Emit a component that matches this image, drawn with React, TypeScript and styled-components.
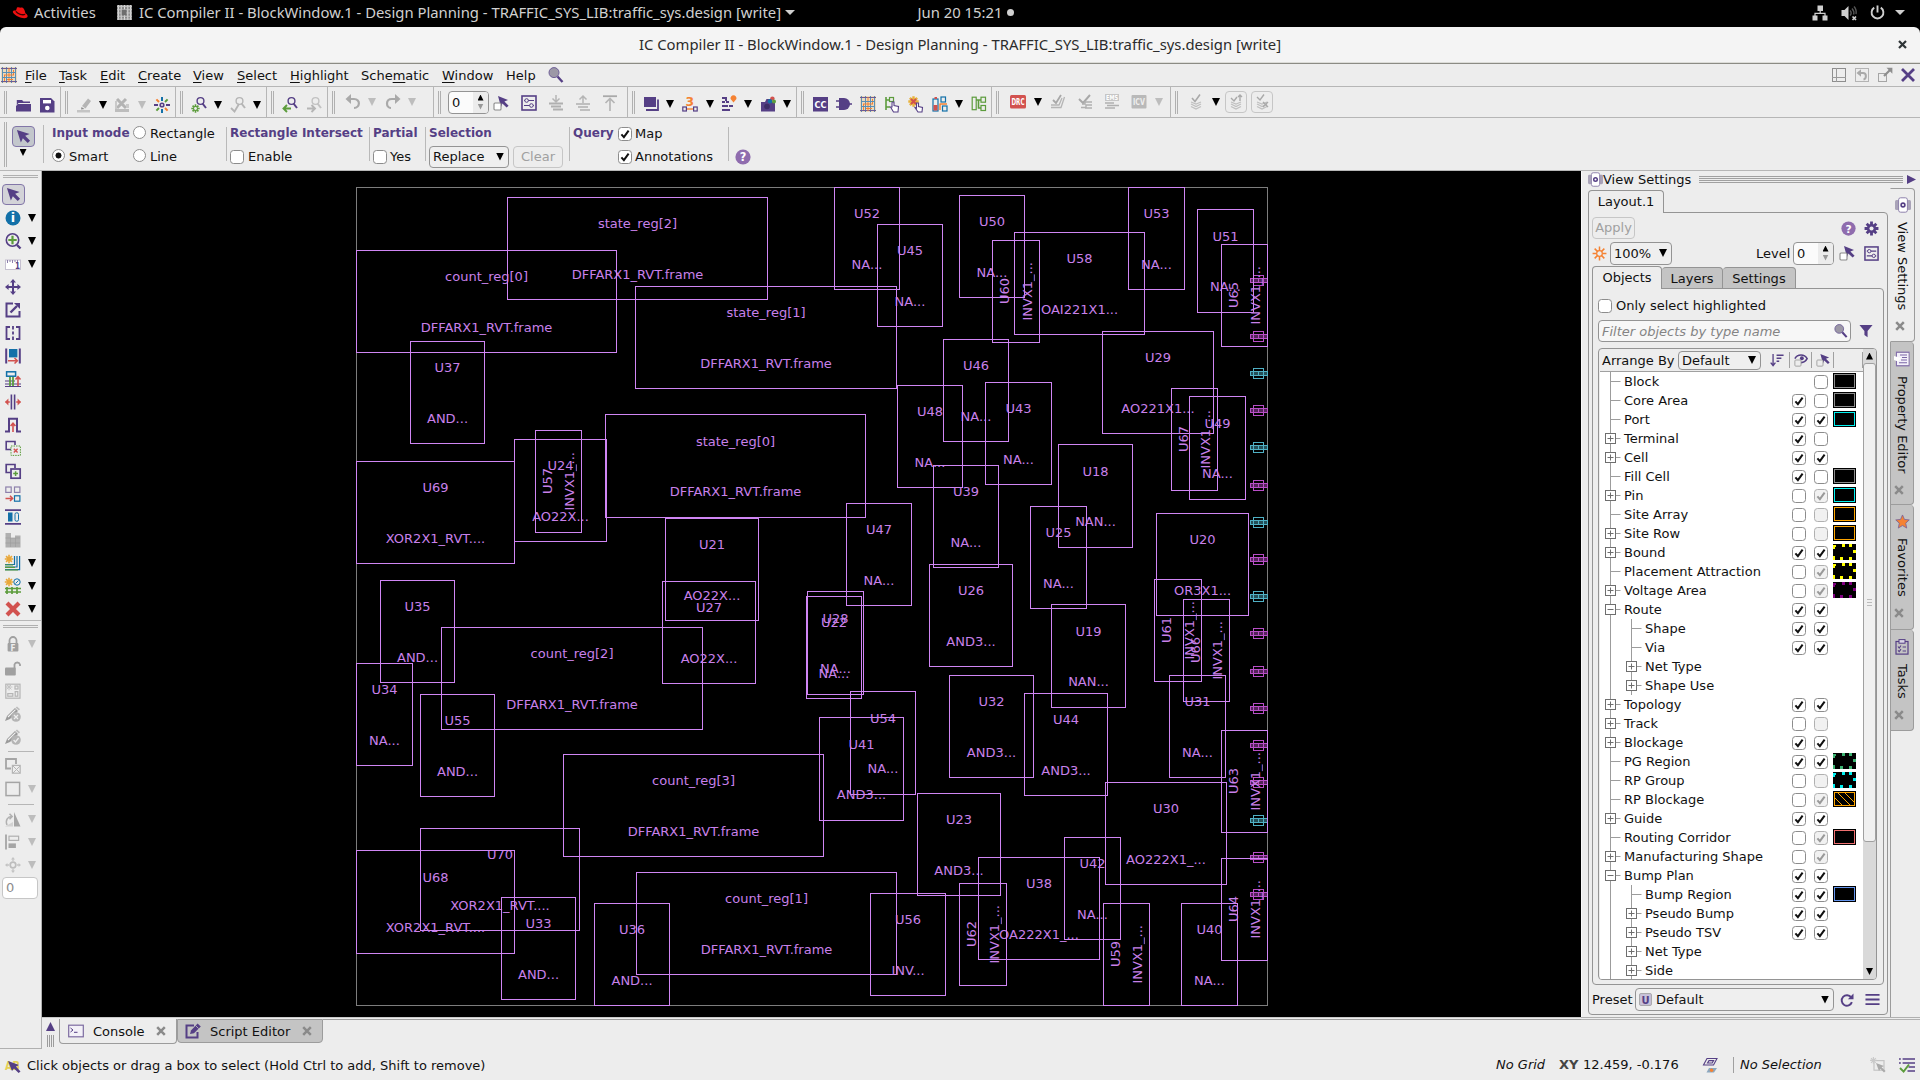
import React from "react";
import styled, { createGlobalStyle, css } from "styled-components";

const P = "#553f85";
const G = "#a9a9a9";
const R = "#d2524f";
const B = "#1270a8";
const GR = "#5c9c3c";
const O = "#f58233";

const Global = createGlobalStyle`
  * { box-sizing: border-box; }
  html, body { margin: 0; padding: 0; background: #000; }
  body { width: 1920px; height: 1080px; overflow: hidden; font: 13px/15px "DejaVu Sans", sans-serif; color: #111; }
`;

/* ---------- icons ---------- */

const box = (x: number, y: number, w: number, h: number, c: string, sw = 1.2) => (
  <rect x={x} y={y} width={w} height={h} fill="none" stroke={c} strokeWidth={sw} />
);
const ln = (d: string, c: string, w = 1.6) => <path d={d} fill="none" stroke={c} strokeWidth={w} />;
const fl = (d: string, c: string) => <path d={d} fill={c} />;
const IconText = styled.text`
  font-family: "DejaVu Sans", sans-serif;
  font-weight: 700;
`;
const tx = (s: string, x: number, y: number, size: number, w: number, c: string) => (
  <IconText x={x} y={y} fontSize={size} textLength={w} lengthAdjust="spacingAndGlyphs" fill={c}>
    {s}
  </IconText>
);
const burst = (cx: number, cy: number, r: number, c: string, w = 1.2) =>
  ln(
    `M${cx} ${cy - r}V${cy + r}M${cx - r} ${cy}H${cx + r}M${cx - r * 0.7} ${cy - r * 0.7}L${cx + r * 0.7} ${cy + r * 0.7}M${cx + r * 0.7} ${cy - r * 0.7}L${cx - r * 0.7} ${cy + r * 0.7}`,
    c,
    w
  );
const gridArt = (
  <>
    <rect width="16" height="16" fill="#ecd9bd" />
    {ln("M1.5 0V16M5.5 0V16M10.5 0V16M14.5 0V16", "#5c8fb4", 1)}
    {ln("M0 1.5H16M0 14.5H16", "#6b5b95", 1)}
    {ln("M8 1V15M3.5 8V14M12.5 3V8", O, 1)}
    {ln("M1 5.5H15M1 10.5H15", "#5c8fb4", 1)}
    {ln("M3 8H13M6 12.5H12", O, 1)}
  </>
);
const lens = (c: string) => (
  <>
    <circle cx="9.5" cy="4" r="3.4" fill="none" stroke={c} strokeWidth="1.4" />
    {ln("M11.5 6.5L15 11", c, 2)}
  </>
);
const layers = (c: string) => (
  <>
    {ln("M3 10L8 12.5L13 10M3 12.5L8 15L13 12.5", c, 1.3)}
    {ln("M3 8L8 10L13 8", c, 1.2)}
  </>
);
const pencil = (
  <>
    {fl("M0 15L2 10L10 2L13 5L5 13Z", "#9a9a9a")}
    {fl("M10.6 1.6L12 0.5L15 3.3L13.8 4.6Z", "#bdbdbd")}
    {ln("M3 11L10.5 3.6", "#f2f2f2", 1.1)}
  </>
);
const pointer = (c: string) => fl("M5 1L15 5L11.4 6.6L15.6 10.8L13.6 12.6L9.4 8.6L8 12Z", c);

const art: Record<string, React.ReactNode> = {
  folder: fl("M1 3H7L8.5 4.5H15V6H3.5L1.8 8V3ZM3 7H16V14.5H1V9Z", P),
  save: (
    <>
      {fl("M1 1H12L15.5 4.5V15.5H1Z", P)}
      <rect x="4" y="3" width="8" height="3.4" fill="#fff" />
      <circle cx="8.3" cy="11" r="2.3" fill="#fff" />
    </>
  ),
  eraser: (
    <>
      {fl("M6 9L12 1.5L15 4L9.5 11.5Z", "#b5b5b5")}
      {fl("M5.5 10L8.5 12L5 12.6Z", "#8c8c8c")}
      {fl("M1 13H14V15.5H1Z", "#c4c4c4")}
    </>
  ),
  eraseAll: (
    <>
      {ln("M3 2L12 11M12 2L3 11", "#b3b3b3", 3)}
      {fl("M1 12H15V15H1Z", "#bdbdbd")}
      {fl("M1 4H3V12H1ZM12 7H15V11H12Z", "#c9c9c9")}
    </>
  ),
  burst: (
    <>
      {ln("M8 0V4M8 12V16", B, 2)}
      {ln("M0 8H4M12 8H16", P, 2)}
      {ln("M2.4 2.4L5 5M11 11L13.6 13.6", O, 2)}
      {ln("M13.6 2.4L11 5M5 11L2.4 13.6", GR, 2)}
      <circle cx="8" cy="8" r="2.6" fill={P} />
      <circle cx="8" cy="8" r="1" fill="#eee" />
    </>
  ),
  findNew: <>{lens(P)}{burst(4.5, 11.5, 4.2, GR, 1.6)}<circle cx="4.5" cy="11.5" r="1.4" fill="#ededed" /></>,
  findCheck: <>{lens("#b5b5b5")}{ln("M1 11L4.5 14.5L9 7", "#b5b5b5", 1.8)}</>,
  findPrev: <>{lens(P)}{ln("M1 11.5H9M5 8L1.5 11.5L5 15", GR, 1.9)}</>,
  findNext: <>{lens("#c2c2c2")}{ln("M1 11.5H9M5.5 8L9 11.5L5.5 15", "#b5b5b5", 1.9)}</>,
  undo: <>{ln("M2 5H9C16 5 15 14 9 14", G, 2.2)}{fl("M0.5 5L6 0V10Z", G)}</>,
  redo: <>{ln("M14 5H7C0 5 1 14 6 14", G, 2.2)}{fl("M15.5 5L10 0V10Z", G)}</>,
  pick: <>{pointer(P)}<rect x="1" y="8" width="7" height="7" rx="1" fill="#fff" stroke="#8a8a8a" strokeWidth="1.1" /></>,
  sliders: (
    <>
      {box(1, 1, 14, 14, P, 1.6)}
      {ln("M3 5.5H13M3 10.5H13", P, 1.2)}
      <circle cx="5.6" cy="5.5" r="1.8" fill="#ededed" stroke={P} />
      <circle cx="10.4" cy="10.5" r="1.8" fill="#ededed" stroke={P} />
    </>
  ),
  pushDown: <>{ln("M8 0V6M4.5 3.5L8 7L11.5 3.5", "#b5b5b5", 1.5)}{ln("M1 8.5H15M3 11.5H13M5 14.5H15", "#b0b0b0", 1.8)}</>,
  popUp: <>{ln("M8 8V1M4.5 4.5L8 1L11.5 4.5", "#b5b5b5", 1.5)}{ln("M1 9H15M3 12H13M5 15H15", "#b0b0b0", 1.6)}</>,
  popTop: <>{ln("M8 16V4M3.5 8L8 3.5L12.5 8", "#b5b5b5", 1.7)}{ln("M1 1.2H15", "#a9a9a9", 1.8)}</>,
  windows: <>{fl("M1 1H13V11H1Z", P)}{ln("M3 14H15V3.5", P, 1.8)}</>,
  three: (
    <>
      {tx("3", 3.6, 9.5, 12, 8.6, O)}
      {ln("M4 13H12", O, 1.4)}
      {box(0.8, 11, 3.6, 4, P)}
      {box(11.6, 11, 3.6, 4, P)}
    </>
  ),
  hier: (
    <>
      {fl("M1 1H6V3H1ZM1 5H4V7H1ZM5 5H8V7H5ZM1 9H7V11H1ZM8 9H12V11H8ZM1 13H9V15H1ZM4 3H6V5H4Z", P)}
      {fl("M12.5 6.5L9.6 3A3 3 0 1 1 15.4 3Z", O)}
    </>
  ),
  camera: (
    <>
      {fl("M1 6H5L6.5 3H12V6H15V15.5H1Z", P)}
      <circle cx="7" cy="10.5" r="2.8" fill="#3c2c66" />
      <circle cx="12.4" cy="2.6" r="2.2" fill={R} />
      <circle cx="10" cy="5.2" r="2.2" fill={B} />
      <circle cx="14" cy="5.6" r="2" fill={GR} />
    </>
  ),
  cc: <><rect x="1" y="1" width="15" height="14.5" fill={P} />{tx("CC", 2.4, 12, 9.5, 12, "#fff")}</>,
  gate: <>{fl("M3 2H8A6 6 0 0 1 8 14H3Z", P)}{ln("M0 5H4M0 11H4M13 8H16", P, 1.6)}</>,
  grid: gridArt,
  treeHand: (
    <>
      {ln("M2 1V14M2 4H6M2 11H6", GR, 1.6)}
      {box(5.5, 1.5, 4, 4, GR)}
      {fl("M7 6L9 6L10 9L14 10L14.5 16H9L6 12L7.5 11Z", "#fff")}
      {ln("M8 6V11L6.5 11L9.5 16H14L14.5 10.5L10 9.5V6Z", P, 1.1)}
    </>
  ),
  burstHand: (
    <>
      {burst(5.5, 5.5, 5.2, "#e8b23a", 2.4)}
      {ln("M3 3L8 8M8 3L3 8", R, 2)}
      {fl("M8.5 7V12L7 11.5L10 16H14L14.5 11.5L10.5 10.5V7Z", "#fff")}
      {ln("M8.5 7V12L7 11.5L10 16H14L14.5 11.5L10.5 10.5V7Z", P, 1.1)}
    </>
  ),
  battery: (
    <>
      {box(1, 3, 5, 12, B)}
      {fl("M2.5 1H5V3H2.5ZM1.5 9H5.5V14.5H1.5Z", R)}
      {box(9, 1, 4.5, 5, B)}
      {box(10.5, 10, 4.5, 5, B)}
      {ln("M7.5 8H15M8 8V14", O, 1.4)}
    </>
  ),
  treeG: <>{box(1.2, 1.2, 4, 12.5, GR)}{box(10, 1.2, 4.5, 5, GR)}{box(10, 9.5, 4.5, 5, GR)}{ln("M5 4H10M7.5 4V12H10", GR)}</>,
  drc: <><rect x="0" y="1" width="16" height="13.5" rx="1.5" fill={R} />{tx("DRC", 1.5, 11, 8.5, 13, "#fff")}</>,
  checkSide: <>{ln("M3 6L6 9L11 1", "#a8a8a8", 1.8)}{ln("M1 11H9L12 4M1 13.5H11L14.5 3", "#b5b5b5", 1.3)}</>,
  checkSteps: <>{ln("M2 5L6 9L13 1", "#a8a8a8", 1.9)}{ln("M15 8H8V10H5M15 11H9V13.5H4M15 14H8", "#b0b0b0", 1.4)}</>,
  ems: (
    <>
      <rect x="1" y="0" width="14" height="7" fill="#c6c6c6" />
      {tx("EMS", 2, 6.2, 6.8, 12, "#fff")}
      {ln("M1 9H10M3 11.5H15M1 14H11", "#b0b0b0", 1.5)}
    </>
  ),
  icv: <><rect x="0.5" y="1" width="15" height="13.5" rx="1" fill="#b9b9b9" />{tx("ICV", 2, 11.2, 9, 12, "#eee")}</>,
  layCheck: <>{layers("#c0c0c0")}{ln("M4 4L7 7.5L12 0.5", G, 1.6)}</>,
  layUp: <>{layers("#c0c0c0")}{ln("M3 4L6 7L9 3M12 7V1M10 3L12 1L14 3", G, 1.4)}</>,
  layX: <>{layers("#c0c0c0")}{ln("M3 3L6 6L10 0.5M9 8L14 13M14 8L9 13", G, 1.4)}</>,
  pointer: fl("M1 1L14.5 5.2L9.8 7.3L15 12.5L12.5 15L7.3 9.8L5.2 14.5Z", P),
  info: <><circle cx="8" cy="8" r="7.5" fill={B} />{tx("i", 5.8, 12.3, 12, 4.4, "#fff")}</>,
  zoomIn: <><circle cx="7.5" cy="7" r="6.2" fill="none" stroke={P} strokeWidth="1.6" />{ln("M12 12L15.5 15.5", P, 2.4)}{ln("M7.5 2.8V11.2M3.3 7H11.7", GR, 2.2)}</>,
  ruler: <><rect x="0.5" y="4" width="15" height="9.5" fill="#fff" stroke="#c5c0d0" />{ln("M2.5 4V7M5 4V6M7.5 4V7M10 4V6M12.5 4V7", "#8d80ab", 1)}{tx("1", 10, 13, 8.5, 5, P)}</>,
  move: <>{ln("M8 2V14M2 8H14", P, 2)}{fl("M8 0L11 3.6H5ZM8 16L11 12.4H5ZM0 8L3.6 5V11ZM16 8L12.4 5V11Z", P)}</>,
  resize: <>{ln("M8 1.5H1.5V14.5H14.5V9", P, 2)}{ln("M5.5 10.5L12 4", P, 2.4)}{fl("M9 1H15V7Z", P)}</>,
  mirror: <>{ln("M5 2H1.5V14H5M11 2H14.5V14H11", P, 1.8)}{ln("M8 1V4.6M8 6.4V9.6M8 11.4V15", P, 1.8)}</>,
  place: <>{ln("M1.2 0.5V15.5M14.8 0.5V15.5", P, 2)}<rect x="4" y="1" width="8.4" height="8.4" fill={B} />{ln("M3 12.8H12M9.5 10L12.4 12.8L9.5 15.5", R, 1.5)}</>,
  wires: <>{ln("M0 10H10M0 13H16M0 15.5H16", P, 1.2)}{ln("M5 5V15M8 5V15", GR, 1.8)}{box(1.6, 0.8, 9, 4.4, B, 1.5)}{ln("M13 15V6M10.5 8.5L13 5.8L15.5 8.5", R, 1.6)}</>,
  split: <>{ln("M6.4 0.5V15.5M9.6 0.5V15.5", P, 1.6)}{ln("M0.5 8H4.8M15.5 8H11.2", R, 1.6)}{fl("M0 8L3.4 4.6V11.4ZM16 8L12.6 4.6V11.4Z", R)}</>,
  bump: <>{ln("M0 14.5H4V1.8H12V14.5H16", P, 2)}{ln("M8 15V6.5M5.6 9L8 6.2L10.4 9", R, 1.6)}</>,
  cut: <>{ln("M6 9.5H1.2V1.5H10V5", P, 1.6)}<rect x="6" y="6" width="9.4" height="9.4" fill="none" stroke={GR} strokeDasharray="1.5 1" />{ln("M8.8 8.8L12.6 12.6M12.6 8.8L8.8 12.6", R, 1.4)}</>,
  copy: <>{ln("M5.5 9.5H1.2V1.5H10V5", P, 1.7)}{box(6, 6, 9.2, 9.2, P, 1.7)}{ln("M10.6 8.2V13M8.2 10.6H13", GR, 1.5)}</>,
  arrows: <>{box(0.8, 1, 5.4, 5.4, "#8d80ab")}{box(9.5, 1, 5.4, 5.4, "#8d80ab")}{box(9.5, 9.8, 5.4, 5.4, B)}{ln("M0.5 12.4H7.5M5 9.8L7.6 12.4L5 15", R, 1.5)}</>,
  spread: <>{ln("M0 1.2H16M0 14.8H16", P, 1.8)}<rect x="3" y="3.5" width="4.5" height="9" fill={B} /><rect x="10" y="3.8" width="3.5" height="8.4" rx="1.5" fill="none" stroke={B} /></>,
  blocks: <>{fl("M0.5 1H6V6H10V3.5H15.5V15.5H0.5Z", "#b0b0b0")}{ln("M5.5 6V15M10.5 6V15M0.5 6H15M0.5 11H15", "#9f9f9f", 0.7)}</>,
  newWire: <>{burst(4, 4, 4.2, "#e9a83a", 1.6)}{ln("M9.5 1V9.5H0M12 1V12H0M14.6 1V14.6H0", B, 1.2)}{ln("M0 10H8M0 12.4H10M0 15H13", GR, 1.2)}</>,
  newRow: <>{burst(4, 4, 4.2, "#e9a83a", 1.6)}<circle cx="12" cy="4" r="3.2" fill="none" stroke={B} />{ln("M10.5 5.5L13.5 2.5", B, 1)}{ln("M0 10.5H16M0 14H16M2 9V16M7 9V16M12 9V16", GR, 1.7)}</>,
  del: ln("M2 2L14 14M14 2L2 14", R, 4.2),
  lock: <>{ln("M4.5 8V4.5A3.5 3.5 0 0 1 11.5 4.5V8", "#a0a0a0", 1.8)}<rect x="2.6" y="7" width="10.8" height="8.6" rx="1" fill="#a0a0a0" />{tx("F", 5.4, 14.6, 8, 5, "#eee")}</>,
  unlock: <>{ln("M9.5 8V4.5A2.9 2.9 0 0 1 15 4.5V6", "#a0a0a0", 1.8)}<rect x="0" y="7.4" width="10.8" height="8.2" rx="1" fill="#a0a0a0" /></>,
  plan: <>{box(0.8, 1.2, 14.2, 14, "#b5b5b5")}{burst(4, 4, 3.4, "#c4c4c4", 1)}{box(10, 3, 3, 3, "#b5b5b5")}{box(2.8, 10.6, 5, 2.6, "#b5b5b5")}{box(10.2, 8.6, 2.6, 4.6, "#b5b5b5")}</>,
  editNo: <>{pencil}<circle cx="11" cy="11" r="4.8" fill="#b5b5b5" />{ln("M9 9L13 13M13 9L9 13", "#eee", 1.3)}</>,
  editOk: <>{pencil}<circle cx="11" cy="11" r="4.8" fill="#b5b5b5" />{ln("M8.6 11L10.4 13L13.6 9", "#eee", 1.3)}</>,
  ungroup: <>{ln("M6 10.5H1V1H11V6", "#a5a5a5", 1.8)}{box(7.4, 7.4, 7.8, 7.8, "#b5b5b5")}{ln("M8 8L15 15M15 8L8 15", "#b5b5b5", 1)}</>,
  rect: box(1, 1.4, 13.6, 13.2, "#a5a5a5", 1.5),
  rotate: <>{ln("M2 14C0 9 3 5.5 6.5 5.5M4.5 2.8L7.2 5.5L4.5 8.2", "#b0b0b0", 1.5)}{fl("M9 1L15.5 15.5H9Z", "#a5a5a5")}{fl("M0 15.5L8 11V15.5Z", "#d2d2d2")}</>,
  align: <>{ln("M1 0.5V15.5", "#a5a5a5", 1.8)}{box(4, 2.2, 9.6, 4.2, "#b0b0b0")}<rect x="3.5" y="9.4" width="7.4" height="4.6" fill="#a5a5a5" /></>,
  center: <><circle cx="8" cy="8" r="2.8" fill="none" stroke="#bdbdbd" strokeWidth="1.7" />{ln("M8 1V4M8 12V15M1 8H4M12 8H15", "#c4c4c4", 1.3)}{fl("M8 0L10 2.4H6ZM8 16L10 13.6H6ZM0 8L2.4 6V10ZM16 8L13.6 6V10Z", "#c4c4c4")}</>,
  console: <><rect x="0.7" y="2.2" width="14.6" height="11.6" fill="#f3f1f8" stroke={P} strokeWidth="1.2" strokeOpacity=".75" />{ln("M2.5 5L5 7L2.5 9M6 9.3H9.5", P, 1)}</>,
  edit: <>{ln("M9 2.5H1.5V14.5H12.5V9", P, 2)}{fl("M5 11L6 7.5L12.6 0.5L15.8 3.6L9 10.2Z", P)}{ln("M10.6 2.6L13.6 5.6", "#c4c4c4", 0.8)}</>,
  find: <><circle cx="6" cy="5.6" r="5" fill="#9c98a6" stroke="#6f5f98" />{ln("M9.5 9.5L14.5 15", P, 2.4)}</>,
  ab: <>{tx("AB", 0, 12.5, 13, 15, "#e6d054")}{fl("M3 4L14 8L11 9.6L15.5 14.5L13.6 16L9 11.6L7 14Z", P)}</>,
  help: <><circle cx="8" cy="8" r="7.6" fill="#8f6cae" />{tx("?", 4.8, 12.4, 12, 6.6, "#fff")}</>,
  gear: <>{burst(8, 8, 7.4, P, 3)}<circle cx="8" cy="8" r="4.9" fill={P} /><circle cx="8" cy="8" r="2.2" fill="#ededed" /></>,
  sun: <>{burst(8, 8, 7.4, O, 1.6)}<circle cx="8" cy="8" r="3" fill="#ededed" stroke={O} strokeWidth="1.3" /></>,
  eyeBox: <>{ln("M1 6.5C4 1 12 1 15 6.5C13 10 10 11 8 11", P, 1.8)}<circle cx="9" cy="6" r="2.2" fill={P} /><rect x="1" y="8" width="7" height="7" rx="1" fill="#ededed" stroke="#9a9a9a" /></>,
  pickBox: <>{pointer(P)}<rect x="1" y="8" width="7" height="7" rx="1" fill="#ededed" stroke="#9a9a9a" /></>,
  sort: <>{ln("M3.5 1V14M0.8 11L3.5 14.4L6.2 11", P, 1.5)}{ln("M7.5 2.5H15.5M7.5 6H13M7.5 9.5H10.5", P, 1.7)}</>,
  funnel: fl("M0.5 1H15.5L9.8 8V15L6.2 12.6V8Z", P),
  eyeTab: <><rect x="0" y="3" width="4" height="10" rx="1.5" fill="#a9a3b8" /><rect x="12" y="3" width="4" height="10" rx="1.5" fill="#a9a3b8" /><rect x="3.6" y="0.8" width="8.8" height="14.4" rx="2" fill="#fff" stroke="#8d80ab" /><circle cx="8" cy="8" r="1.9" fill="none" stroke={P} strokeWidth="1.6" /></>,
  prop: <>{box(2.5, 1.2, 12.5, 13.6, "#8570ad")}<rect x="3" y="2" width="11.5" height="12" fill="#f4f1fa" />{ln("M6 4H13M8 6.5H13M7 9H13M5 11.8H13", "#7a66a6", 1.1)}{fl("M0 5L7 7L4 10.5L0 9Z", "#fff")}</>,
  star: <path d="M8 1L10.1 5.8L15.2 6.3L11.4 9.8L12.5 15L8 12.3L3.5 15L4.6 9.8L0.8 6.3L5.9 5.8Z" fill={O} stroke="#7c6395" strokeWidth=".9" />,
  tasks: <>{box(2, 2.5, 12, 12.6, P)}<rect x="5" y="0.6" width="6" height="3.6" fill="#dcd8e8" stroke={P} />{ln("M4 7.5L5.2 9L7 6.5M4 11.3L5.2 12.6L7 10.2M8.6 8H12M8.6 12H12", P, 1.1)}</>,
  uBox: <><rect x="0.7" y="0.7" width="14.6" height="14.6" rx="1.5" fill="#c9c2da" stroke="#9a9a9a" />{tx("U", 3, 13, 13, 10, P)}</>,
  refresh: <>{ln("M12.8 5A6 6 0 1 0 13.6 10.5", P, 2.2)}{fl("M15.4 0.5V7H9Z", P)}</>,
  menu: ln("M0.5 3H15.5M0.5 8H15.5M0.5 13H15.5", P, 1.9),
  layout: <>{box(1.5, 1.5, 13, 13, "#8e8e8e", 1)}{ln("M5.5 1V15M1 10.5H15", "#9a9a9a", 1)}</>,
  restore: <>{box(1.5, 1.5, 13, 13, "#b4b4b4", 1)}{ln("M4.5 6H9C13 6 12.5 12 9.5 12.5", G, 2)}{fl("M2.5 6L7 2.2V9.8Z", G)}</>,
  popOut: <>{box(1.5, 6.5, 8, 8, "#a5a5a5", 1)}{ln("M7 9L13.5 2.5", "#8e8e8e", 2.2)}{fl("M9.5 0.8H15.4V6.7Z", "#8e8e8e")}</>,
  closeP: ln("M2 2L14 14M14 2L2 14", P, 2.8),
  xy: <>{ln("M5 1.5H15L11.5 8H1.5ZM7 3.6H11.6L10.2 6H5.5Z", P, 1.1)}{fl("M7 11H15L12 15.5H4.5Z", "#8ba7bf")}<circle cx="9.6" cy="13.2" r="1.7" fill={O} /></>,
  selOff: <>{box(4, 3.6, 10, 9.6, "#c4c4c4")}{burst(3.4, 3.4, 3.4, "#c9c9c9", 1.1)}{fl("M6 6L14 9L11.6 10.2L15.6 14L14 15.6L10.4 11.8L9 14Z", "#aaa")}</>,
  queue: <>{ln("M0 2H1.8M3.6 2H16M0 6H1.8M3.6 6H16M9.5 10H16M8.5 14H16", P, 1.7)}{ln("M1 11L4.6 14.6L10 7.5", GR, 2)}</>,
  hat: <>{fl("M5 2.5C7 1.5 8 3 9 2.6C11 2 12.6 4 13.4 8.2C15.6 9.4 16.4 11.4 15 12.6C12 14.8 3.6 11.6 1 7.6C0.2 5.6 2.2 5.2 4 5.6Z", "#ee1010")}{ln("M3.8 6.4C5.6 9 10.6 10.6 13.2 9.2", "#3a0000", 1.3)}</>,
  chip: <><rect width="16" height="16" fill="#8a8a8a" />{ln("M1.5 0V16M4.5 0V16M8 0V16M11.5 0V16M14.5 0V16", "#e4e4e4", 1)}{ln("M0 1.5H16M0 5H16M0 8.5H16M0 12H16M0 15H16", "#c8c8c8", 1)}{fl("M5 5H10V11H5Z", "#6d6d6d")}</>,
  network: <>{fl("M5.5 0.5H11V6H5.5ZM0.5 10.5H5.5V15.5H0.5ZM10.5 10.5H15.5V15.5H10.5Z", "#d0d0d0")}{ln("M8.2 6V8.4M3 11V8.4H13V11", "#d0d0d0", 1.2)}</>,
  volume: <>{fl("M0.5 5H3.5L7.5 1V15L3.5 11H0.5Z", "#d0d0d0")}{ln("M9 5.5C10.4 7 10.4 9 9 10.5M11 3.5C13.2 6 13.2 8 12.6 9.5M13 1.5C15.2 4 15.4 7 15 9", "#555", 1.4)}{ln("M11.5 11.5L15 15M15 11.5L11.5 15", "#d0d0d0", 1.7)}</>,
  power: <>{ln("M4.5 2.8A6.3 6.3 0 1 0 11.5 2.8", "#d0d0d0", 2)}{ln("M8 0.5V8", "#d0d0d0", 2)}</>,
};

const Svg = styled.svg<{ $g?: number; $dy?: number }>`
  flex: none;
  display: block;
  overflow: visible;
  margin-left: ${(p) => p.$g ?? 0}px;
  margin-top: ${(p) => p.$dy ?? 0}px;
`;
const Icon = ({ n, g, dy, s = 16 }: { n: string; g?: number; dy?: number; s?: number }) => (
  <Svg $g={g} $dy={dy} width={s} height={s} viewBox="0 0 16 16">
    {art[n]}
  </Svg>
);
const Caret = styled.i<{ $g?: number; $off?: boolean; $dy?: number; $up?: boolean; $s?: number; $c?: string }>`
  flex: none;
  width: ${(p) => (p.$s ?? 4) * 2}px;
  height: ${(p) => (p.$s ?? 4) * 2}px;
  margin-left: ${(p) => p.$g ?? 0}px;
  margin-top: ${(p) => p.$dy ?? 0}px;
  background: ${(p) => p.$c ?? (p.$off ? "#bdbdbd" : "#000")};
  clip-path: ${(p) => (p.$up ? "polygon(50% 0, 100% 100%, 0 100%)" : "polygon(0 0, 100% 0, 50% 100%)")};
`;

/* ---------- shell ---------- */

const Screen = styled.div`
  width: 1920px;
  height: 1080px;
  display: flex;
  flex-direction: column;
  background: #000;
`;
const TopBar = styled.header`
  height: 27px;
  padding-bottom: 2px;
  flex: none;
  display: grid;
  grid-template-columns: 1fr auto 1fr;
  align-items: center;
  color: #d0d0d0;
  font: 14.84px/23px "Noto Sans", sans-serif;
`;
const TopLeft = styled.div`
  display: flex;
  align-items: center;
  padding-left: 12px;
  white-space: nowrap;
`;
const Activities = styled.span`
  width: 89px;
  padding-left: 6px;
`;
const AppName = styled.span`
  width: 646px;
  margin-left: 7px;
`;
const Clock = styled.div`
  display: flex;
  align-items: center;
  gap: 5px;
  margin-left: 12px;
`;
const Dot = styled.i`
  width: 7px;
  height: 7px;
  border-radius: 50%;
  background: #d0d0d0;
`;
const Tray = styled.div`
  display: flex;
  align-items: center;
  justify-content: flex-end;
  gap: 13px;
  padding-right: 15px;
`;
const TrayCaret = styled.i<{ $ml?: number }>`
  width: 10px;
  height: 5px;
  margin-left: ${(p) => p.$ml ?? 0}px;
  background: #d0d0d0;
  clip-path: polygon(0 0, 100% 0, 50% 100%);
`;
const TitleBar = styled.div`
  height: 37px;
  padding-bottom: 2px;
  flex: none;
  display: grid;
  grid-template-columns: 36px 1fr 36px;
  align-items: center;
  justify-items: center;
  background: #f4f4f4;
  border-bottom: 1px solid #8b8b84;
  border-radius: 6px 6px 0 0;
  box-shadow: inset 0 -1px #dcdcd8;
  font: 14.84px/32px "Noto Sans", sans-serif;
  color: #2b2b2b;
`;
const Body = styled.div`
  flex: 1;
  min-height: 0;
  display: flex;
  flex-direction: column;
  background: #ededed;
`;
const MenuBar = styled.nav`
  height: 23px;
  flex: none;
  display: flex;
  align-items: center;
  padding-left: 1px;
  border-bottom: 1px solid #b6b6b6;
`;
const MenuItem = styled.span<{ $w: number }>`
  width: ${(p) => p.$w}px;
  white-space: nowrap;
  u { text-underline-offset: 2px; text-decoration-thickness: 1px; }
`;
const MenuRight = styled.div`
  margin-left: auto;
  display: flex;
  gap: 7px;
  padding-right: 4px;
`;
const ToolRow = styled.div`
  height: 31px;
  flex: none;
  display: flex;
  border-bottom: 1px solid #b6b6b6;
`;
const ToolGroup = styled.div<{ $w: number }>`
  width: ${(p) => p.$w}px;
  display: flex;
  align-items: center;
  padding-left: 4px;
  border-right: ${(p) => (p.$w > 300 ? "0" : "1px solid #b6b6b6")};
`;
const Handle = styled.i<{ $h?: number }>`
  flex: none;
  width: 3px;
  height: ${(p) => p.$h ?? 23}px;
  border: solid #b0b0b0;
  border-width: 0 1px;
`;
const SpinBox = styled.div<{ $w: number; $g?: number }>`
  flex: none;
  width: ${(p) => p.$w}px;
  height: 23px;
  margin-left: ${(p) => p.$g ?? 0}px;
  display: flex;
  border: 1px solid #949494;
  border-radius: 4px;
  background: #fbfbfb;
  padding-left: 3px;
  line-height: 21px;
  overflow: hidden;
`;
const Steps = styled.div`
  margin-left: auto;
  width: 15px;
  background: #ececec;
  display: flex;
  flex-direction: column;
  align-items: center;
  justify-content: center;
  gap: 3px;
`;
const FlatButton = styled.div<{ $g?: number }>`
  flex: none;
  width: 22px;
  height: 22px;
  margin-left: ${(p) => p.$g ?? 0}px;
  display: grid;
  place-items: center;
  border: 1px solid #c6c6c6;
  border-radius: 4px;
  margin-top: -1px;
`;
const ModeRow = styled.div`
  height: 53px;
  flex: none;
  display: flex;
  align-items: center;
  padding-left: 4px;
  border-bottom: 1px solid #b6b6b6;
`;
const ModeButton = styled.div`
  width: 24px;
  height: 48px;
  margin: 0 8px 0 4px;
  padding-top: 6px;
  display: flex;
  flex-direction: column;
  align-items: center;
  gap: 2px;
`;
const Pressed = styled.div<{ $bg?: string }>`
  width: 23px;
  height: 21px;
  flex: none;
  display: grid;
  place-items: center;
  border: 1px solid #8276a8;
  border-radius: 4px;
  background: ${(p) => p.$bg ?? "#c3c7cc"};
`;
const ModeBlock = styled.div<{ $w: number; $l?: number; $s?: number }>`
  width: ${(p) => p.$w}px;
  height: ${(p) => p.$s ?? 34}px;
  flex: none;
  border-left: 1px solid #b9b9b9;
  padding-left: ${(p) => p.$l ?? 3}px;
  padding-top: 2px;
  display: flex;
  flex-direction: column;
  justify-content: center;
  overflow: visible;
`;
const ModeLine = styled.div`
  height: 23px;
  flex: none;
  display: flex;
  align-items: center;
  white-space: nowrap;
`;
const Heading = styled.b<{ $w?: number }>`
  color: ${P};
  font: bold 12px/15px "DejaVu Sans", sans-serif;
  width: ${(p) => (p.$w ? p.$w + "px" : "auto")};
`;
const Lab = styled.span<{ $w?: number; $g?: number }>`
  width: ${(p) => (p.$w ? p.$w + "px" : "auto")};
  margin-left: ${(p) => p.$g ?? 4}px;
`;
const RadioDot = styled.i<{ $on?: boolean }>`
  flex: none;
  width: 13px;
  height: 13px;
  margin-top: -2px;
  border-radius: 50%;
  border: 1px solid #8c8c8c;
  background: ${(p) => (p.$on ? "radial-gradient(circle, #111 0 2.7px, #fff 3.3px)" : "#fff")};
`;
const CheckBox = styled.span<{ $off?: boolean }>`
  flex: none;
  width: 14px;
  height: 14px;
  border: 1px solid ${(p) => (p.$off ? "#b0b0b0" : "#8c8c8c")};
  border-radius: 3.5px;
  background: ${(p) => (p.$off ? "#f1f1f1" : "#fff")};
  display: block;
  svg { display: block; }
`;
const Check = ({ on, off }: { on?: boolean; off?: boolean }) => (
  <CheckBox $off={off}>
    {on && (
      <svg width="12" height="12" viewBox="0 0 12 12">
        <path d="M2.4 6.3L4.9 9.1L9.6 2.6" fill="none" stroke={off ? "#999" : "#111"} strokeWidth="2" />
      </svg>
    )}
  </CheckBox>
);
const Combo = styled.div<{ $w: number; $h?: number; $g?: number }>`
  flex: none;
  width: ${(p) => p.$w}px;
  height: ${(p) => p.$h ?? 22}px;
  margin-left: ${(p) => p.$g ?? 0}px;
  display: flex;
  align-items: center;
  justify-content: space-between;
  padding: 0 4px 0 3px;
  border: 1px solid #949494;
  border-radius: 4px;
  background: #efefef;
`;
const GhostButton = styled.div<{ $w: number; $g?: number }>`
  width: ${(p) => p.$w}px;
  height: 22px;
  margin-left: ${(p) => p.$g ?? 0}px;
  border: 1px solid #c6c6c6;
  border-radius: 4px;
  color: #a0a0a0;
  text-align: center;
  line-height: 20px;
`;

/* ---------- work area ---------- */

const Work = styled.div`
  flex: 1;
  min-height: 0;
  display: grid;
  grid-template-columns: 42px 1539px 339px;
  grid-template-rows: 846px 32px;
`;
const SideBar = styled.aside`
  grid-row: 1 / 3;
  border-right: 1px solid #b0b0b0;
  border-bottom: 1px solid #b0b0b0;
  display: flex;
  flex-direction: column;
  padding-top: 4px;
`;
const Grip = styled.i<{ $t?: number }>`
  flex: none;
  height: 3px;
  margin: ${(p) => p.$t ?? 0}px 3px 0;
  border: solid #b0b0b0;
  border-width: 1px 0;
`;
const SideItem = styled.div<{ $h?: number; $x?: number; $t?: number }>`
  flex: none;
  height: ${(p) => p.$h ?? 23}px;
  display: flex;
  align-items: center;
  padding-left: ${(p) => p.$x ?? 5}px;
  padding-top: ${(p) => p.$t ?? 0}px;
`;
const SideLine = styled.i<{ $full?: boolean; $t?: number }>`
  flex: none;
  height: 1px;
  margin: ${(p) => p.$t ?? 0}px ${(p) => (p.$full ? "0" : "7px")} 0 ${(p) => (p.$full ? "0" : "8px")};
  background: #b6b6b6;
`;
const SideInput = styled.div`
  flex: none;
  width: 36px;
  height: 22px;
  margin-left: 2px;
  border: 1px solid #c6c6c6;
  border-radius: 4px;
  background: #fff;
  color: #8c8c8c;
  padding-left: 3px;
  line-height: 20px;
`;
const Canvas = styled.main`
  position: relative;
  background: #000;
  overflow: hidden;
`;
const LINE = "#d086f4";
const at = (x1: number, y1: number, x2: number, y2: number) => css`
  position: absolute;
  left: ${x1 - 42}px;
  top: ${y1 - 171}px;
  width: ${x2 - x1 + 1}px;
  height: ${y2 - y1 + 1}px;
`;
const Die = styled.div`
  ${at(356, 187, 1267, 1005)}
  border: 1px solid #7d7d7d;
`;
type Box4 = [number, number, number, number];
const CellBox = styled.div<{ $b: Box4; $v?: boolean }>`
  ${(p) => at(...p.$b)}
  border: 1px solid ${LINE};
  display: flex;
  flex-direction: ${(p) => (p.$v ? "row" : "column")};
`;
const CellLabel = styled.div<{ $v?: boolean; $t?: number }>`
  flex: 1 1 0;
  min-width: 0;
  min-height: 0;
  display: flex;
  align-items: center;
  justify-content: center;
  white-space: nowrap;
  color: #c880ea;
  padding-top: ${(p) => (p.$v ? 0 : p.$t ?? 0)}px;
  span {
    ${(p) => p.$v && css`writing-mode: vertical-rl; transform: rotate(180deg);`}
  }
`;
const Port = styled.svg<{ $y: number }>`
  position: absolute;
  left: 1208px;
  top: ${(p) => p.$y - 171 - 5}px;
`;

const F = "DFFARX1_RVT.frame";
const V = "INVX1_...";
const cells: [string, string, number, number, number, number][] = [
  ["state_reg[2]", F, 507, 197, 767, 299],
  ["count_reg[0]", F, 356, 250, 616, 352],
  ["state_reg[1]", F, 635, 286, 896, 388],
  ["state_reg[0]", F, 605, 414, 865, 517],
  ["count_reg[2]", F, 441, 627, 702, 729],
  ["count_reg[3]", F, 563, 754, 823, 856],
  ["count_reg[1]", F, 636, 872, 896, 974],
  ["U37", "AND...", 410, 341, 484, 443],
  ["U24", "AO22X...", 514, 439, 606, 541],
  ["U57", V, 535, 430, 581, 532],
  ["U69", "XOR2X1_RVT....", 356, 461, 514, 563],
  ["U21", "AO22X...", 665, 518, 758, 620],
  ["U27", "AO22X...", 662, 581, 755, 683],
  ["U35", "AND...", 380, 580, 454, 682],
  ["U34", "NA...", 356, 663, 412, 765],
  ["U55", "AND...", 420, 694, 494, 796],
  ["U70", "XOR2X1_RVT....", 420, 828, 579, 930],
  ["U68", "XOR2X1_RVT....", 356, 850, 514, 953],
  ["U33", "AND...", 501, 897, 575, 999],
  ["U36", "AND...", 594, 903, 669, 1005],
  ["U52", "NA...", 834, 187, 899, 289],
  ["U45", "NA...", 877, 224, 942, 326],
  ["U50", "NA...", 959, 195, 1024, 297],
  ["U58", "OAI221X1...", 1014, 232, 1144, 334],
  ["U60", V, 992, 240, 1039, 342],
  ["U53", "NA...", 1128, 187, 1184, 289],
  ["U51", "NA...", 1197, 209, 1253, 312],
  ["U65", V, 1221, 244, 1267, 346],
  ["U46", "NA...", 943, 339, 1008, 441],
  ["U43", "NA...", 985, 382, 1051, 484],
  ["U48", "NA...", 897, 385, 962, 487],
  ["U29", "AO221X1...", 1102, 331, 1213, 433],
  ["U67", V, 1171, 388, 1217, 490],
  ["U49", "NA...", 1189, 396, 1245, 499],
  ["U18", "NAN...", 1058, 444, 1132, 547],
  ["U39", "NA...", 933, 465, 998, 567],
  ["U47", "NA...", 846, 503, 911, 605],
  ["U25", "NA...", 1030, 506, 1086, 608],
  ["U26", "AND3...", 929, 564, 1012, 666],
  ["U20", "OR3X1...", 1156, 513, 1248, 615],
  ["U61", V, 1154, 579, 1201, 681],
  ["U66", V, 1183, 599, 1229, 701],
  ["U28", "NA...", 807, 591, 863, 694],
  ["U22", "NA...", 806, 596, 861, 698],
  ["U54", "NA...", 850, 691, 915, 794],
  ["U41", "AND3...", 819, 717, 903, 820],
  ["U19", "NAN...", 1051, 604, 1125, 707],
  ["U32", "AND3...", 949, 675, 1033, 777],
  ["U44", "AND3...", 1024, 693, 1107, 795],
  ["U31", "NA...", 1169, 675, 1225, 777],
  ["U63", V, 1221, 730, 1267, 832],
  ["U30", "AO222X1_...", 1105, 782, 1226, 884],
  ["U23", "AND3...", 917, 793, 1000, 895],
  ["U42", "NA...", 1064, 837, 1120, 939],
  ["U38", "OA222X1_...", 978, 857, 1099, 959],
  ["U62", V, 959, 883, 1006, 985],
  ["U56", "INV...", 870, 893, 945, 995],
  ["U59", V, 1103, 903, 1149, 1005],
  ["U40", "NA...", 1181, 903, 1237, 1005],
  ["U64", V, 1221, 858, 1267, 960],
];
const portYs = [280, 336, 373, 410, 447, 485, 522, 559, 596, 633, 671, 708, 745, 782, 820, 857, 894];
const cyanPorts = [373, 447, 522, 596, 820];

/* ---------- bottom tabs ---------- */

const BottomTabs = styled.div`
  display: flex;
  align-items: flex-start;
  border-top: 1px solid #c9c9c9;
  padding-left: 2px;
`;
const BottomGrip = styled.div`
  width: 15px;
  padding: 4px 2px 0 0;
  display: flex;
  flex-direction: column;
  align-items: center;
  gap: 4px;
`;
const GripBars = styled.i`
  width: 7px;
  height: 12px;
  background: repeating-linear-gradient(90deg, #9c9c9c 0 1px, transparent 1px 2px);
`;
const BTab = styled.div<{ $w: number; $on?: boolean }>`
  width: ${(p) => p.$w}px;
  height: ${(p) => (p.$on ? 25 : 24)}px;
  margin-top: 1px;
  display: flex;
  align-items: center;
  border: 1px solid #9c9c9c;
  border-top: ${(p) => (p.$on ? "0" : "1px solid #9c9c9c")};
  border-radius: 0 0 4px 4px;
  background: ${(p) => (p.$on ? "#ededed" : "#c4c4c4")};
  padding-left: ${(p) => (p.$on ? 8 : 7)}px;
`;
const BRest = styled.i`
  flex: 1;
  margin-top: 1px;
  border-top: 1px solid #9c9c9c;
`;
const Cross = ({ g }: { g?: number }) => (
  <Svg $g={g} width="10" height="10" viewBox="0 0 10 10">
    <path d="M1.2 1.2L8.8 8.8M8.8 1.2L1.2 8.8" stroke="#8a8a8a" strokeWidth="2.5" />
  </Svg>
);

/* ---------- right dock ---------- */

const Dock = styled.aside`
  display: flex;
  flex-direction: column;
  border-left: 1px solid #fafafa;
`;
const DockTitle = styled.div`
  height: 17px;
  flex: none;
  display: flex;
  align-items: center;
  padding: 0 4px 0 6px;
`;
const DockGrip = styled.i`
  flex: 1;
  height: 7px;
  margin: 0 4px 0 8px;
  background: repeating-linear-gradient(#a0a0a0 0 1px, transparent 1px 2px);
`;
const RightTri = styled.i`
  width: 9px;
  height: 9px;
  background: ${P};
  clip-path: polygon(0 0, 100% 50%, 0 100%);
`;
const DockBody = styled.div`
  flex: 1;
  min-height: 0;
  display: grid;
  grid-template-columns: 308px 1fr;
  grid-template-rows: minmax(0, 1fr);
`;
const DockLeft = styled.div`
  padding: 2px 2px 2px 6px;
  min-height: 0;
  display: flex;
  flex-direction: column;
`;
const Tab = styled.div<{ $w: number; $on?: boolean }>`
  width: ${(p) => p.$w}px;
  height: ${(p) => (p.$on ? 23 : 22)}px;
  flex: none;
  border: 1px solid #949494;
  border-bottom: ${(p) => (p.$on ? "0" : "1px solid #949494")};
  border-left: ${(p) => (p.$on ? "1px solid #949494" : "0")};
  border-radius: 4px 4px 0 0;
  background: ${(p) => (p.$on ? "#ededed" : "#c4c4c4")};
  text-align: center;
  line-height: 21px;
  z-index: 1;
`;
const TabRow = styled.div`
  display: flex;
  align-items: flex-end;
  flex: none;
  margin-bottom: -1px;
`;
const Pane = styled.div<{ $pad: string }>`
  flex: 1;
  min-height: 0;
  border: 1px solid #949494;
  border-radius: 0 4px 4px 4px;
  padding: ${(p) => p.$pad};
  display: flex;
  flex-direction: column;
`;
const Line = styled.div<{ $h: number }>`
  height: ${(p) => p.$h}px;
  flex: none;
  display: flex;
  align-items: center;
`;
const Filter = styled.div`
  width: 253px;
  height: 22px;
  display: flex;
  align-items: center;
  justify-content: space-between;
  border: 1px solid #949494;
  border-radius: 4px;
  background: #f7f7f7;
  padding: 0 2px 0 3px;
  color: #848484;
  font-style: italic;
`;
const Table = styled.div`
  width: 279px;
  height: 632px;
  flex: none;
  display: grid;
  grid-template-columns: 1fr 13px;
  border: 1px solid #949494;
  border-radius: 4px;
  overflow: hidden;
`;
const TableMain = styled.div`
  min-width: 0;
  overflow: hidden;
`;
const THead = styled.div`
  height: 23px;
  display: flex;
  align-items: center;
  padding: 0 0 0 2px;
  margin-left: 1px;
  border-bottom: 1px solid #a0a0a0;
`;
const HSep = styled.i<{ $g?: number }>`
  width: 1px;
  height: 16px;
  margin-left: ${(p) => p.$g ?? 5}px;
  background: #a0a0a0;
`;
const Tree = styled.div`
  height: 608px;
  background: #fff;
  margin-left: 1px;
  overflow: hidden;
`;
const TRow = styled.div`
  height: 19px;
  display: grid;
  grid-template-columns: 192px 22px 19px 1fr;
  align-items: start;
  ${CheckBox} { margin-top: 3px; }
`;
const SwatchSvg = styled.svg`
  display: block;
  margin-top: 1px;
`;
const TName = styled.div`
  display: flex;
  align-items: center;
  white-space: nowrap;
  height: 19px;
`;
const Branch = styled.svg`
  flex: none;
  display: block;
`;
const Scroll = styled.div`
  display: grid;
  grid-template-rows: 14px 479px 1fr;
  justify-items: center;
  align-items: center;
  background: #d9d9d9;
`;
const Thumb = styled.div`
  width: 13px;
  height: 479px;
  border: 1px solid #a0a0a0;
  border-radius: 3px;
  background: #f0f0f0;
  display: grid;
  place-items: center;
  i { width: 5px; height: 7px; background: repeating-linear-gradient(#bbb 0 1px, transparent 1px 3px); }
`;
const SideTabs = styled.div`
  display: flex;
  flex-direction: column;
`;
const VTab = styled.div<{ $h: number; $on?: boolean; $i?: number }>`
  width: ${(p) => (p.$on ? 25 : 24)}px;
  height: ${(p) => p.$h}px;
  flex: none;
  display: flex;
  flex-direction: column;
  align-items: center;
  padding-top: ${(p) => (p.$i ?? 9)}px;
  border: 1px solid #9c9c9c;
  border-top-width: ${(p) => (p.$on ? 1 : 0)}px;
  border-left-color: ${(p) => (p.$on ? "transparent" : "#9c9c9c")};
  border-radius: 0 4px 4px 0;
  background: ${(p) => (p.$on ? "#ededed" : "#c4c4c4")};
`;
const VText = styled.span<{ $h: number }>`
  writing-mode: vertical-rl;
  height: ${(p) => p.$h}px;
  margin: 9px 0 0 0;
  white-space: nowrap;
`;
const VRest = styled.i`
  flex: 1;
  border-left: 1px solid #9c9c9c;
`;
const PresetRow = styled.div`
  height: 27px;
  flex: none;
  display: flex;
  align-items: center;
  margin-top: 1px;
`;
const PresetName = styled.span`
  flex: 1;
  margin-left: 4px;
`;
const DockFoot = styled.div`
  display: flex;
  flex-direction: column;
`;
const FootLine = styled.i`
  height: 3px;
  border: solid #b0b0b0;
  border-width: 1px 0;
`;
const StatusBar = styled.footer`
  height: 31px;
  flex: none;
  display: flex;
  align-items: center;
  padding: 0 4px 0 5px;
`;
const Stat = styled.span<{ $w?: number; $i?: boolean; $b?: boolean; $g?: number; $t?: number }>`
  width: ${(p) => (p.$w ? p.$w + "px" : "auto")};
  margin-left: ${(p) => p.$g ?? 0}px;
  padding-top: ${(p) => p.$t ?? 0}px;
  font-style: ${(p) => (p.$i ? "italic" : "normal")};
  font-weight: ${(p) => (p.$b ? 700 : 400)};
  color: ${(p) => (p.$b ? "#444" : "#111")};
  white-space: nowrap;
`;

/* ---------- data ---------- */

// checkbox codes: 0 none, 1 empty, 2 checked, 3 disabled empty, 4 disabled checked
type RowT = [string, number, string, number, number, string?];
const rows: RowT[] = [
  ["Block", 0, "", 0, 1, "#8c8c8c"],
  ["Core Area", 0, "", 2, 1, "#8c8c8c"],
  ["Port", 0, "", 2, 2, "#00f0f0"],
  ["Terminal", 0, "+", 2, 1],
  ["Cell", 0, "+", 2, 2],
  ["Fill Cell", 0, "", 2, 1, "#8c8c8c"],
  ["Pin", 0, "+", 1, 4, "#00f0f0"],
  ["Site Array", 0, "", 1, 3, "#ffa500"],
  ["Site Row", 0, "+", 1, 3, "#ffa500"],
  ["Bound", 0, "+", 2, 2, "d#ffff00"],
  ["Placement Attraction", 0, "", 1, 4, "d#ffff00"],
  ["Voltage Area", 0, "+", 1, 4, "d#800080"],
  ["Route", 0, "-", 2, 2],
  ["Shape", 1, "", 2, 2],
  ["Via", 1, "", 2, 2],
  ["Net Type", 1, "+", 0, 0],
  ["Shape Use", 1, "+", 0, 0],
  ["Topology", 0, "+", 2, 2],
  ["Track", 0, "+", 1, 3],
  ["Blockage", 0, "+", 2, 2],
  ["PG Region", 0, "", 2, 2, "d#3cb371"],
  ["RP Group", 0, "", 1, 3, "d#00f0f0"],
  ["RP Blockage", 0, "", 1, 4, "h#ffa500"],
  ["Guide", 0, "+", 2, 2],
  ["Routing Corridor", 0, "", 1, 4, "#f07070"],
  ["Manufacturing Shape", 0, "+", 1, 4],
  ["Bump Plan", 0, "-", 2, 2],
  ["Bump Region", 1, "", 2, 2, "#6495ed"],
  ["Pseudo Bump", 1, "+", 2, 2],
  ["Pseudo TSV", 1, "+", 2, 2],
  ["Net Type", 1, "+", 0, 0],
  ["Side", 1, "+", 0, 0],
];

const Swatch = ({ c }: { c: string }) => {
  const kind = c[0] === "#" ? "" : c[0];
  const col = kind ? c.slice(1) : c;
  return (
    <SwatchSvg width="23" height="16">
      <rect width="23" height="16" fill="#000" />
      {kind === "d" ? (
        <path
          d="M0 1H3V3H2V5H0ZM9 0H12V3H9ZM16 0H19V3H16ZM20 6H23V9H20ZM0 12H2V16H0ZM7 13H10V16H7ZM16 13H19V16H16Z"
          fill={col}
        />
      ) : (
        <rect x="1.5" y="1.5" width="20" height="13" fill="none" stroke={col} />
      )}
      {kind === "h" && <path d="M2 7L9 14M5 2L17 14M12 2L21 11" stroke={col} strokeWidth="1" />}
    </SwatchSvg>
  );
};
const Box = ({ v }: { v: number }) => (v ? <Check on={v === 2 || v === 4} off={v > 2} /> : <span />);

const TreeBranch = ({ lvl, k }: { lvl: number; k: string }) => {
  const x = 10.5 + lvl * 21;
  return (
    <Branch width={lvl ? 45 : 24} height="19">
      <path d={`M10.5 0V19${lvl ? `M${x} 0V19` : ""}M${x} 9.5H${x + 10}`} stroke="#9c9c9c" fill="none" />
      {k && (
        <>
          <rect x={x - 5} y="4.5" width="10" height="10" fill="#fff" stroke="#6e6e6e" />
          <path d={`M${x - 3} 9.5H${x + 3}${k === "+" ? `M${x} 6.5V12.5` : ""}`} stroke="#6e6e6e" />
        </>
      )}
    </Branch>
  );
};

const menus: [string, string, string, number][] = [
  ["", "F", "ile", 34], ["", "T", "ask", 41], ["", "E", "dit", 38], ["", "C", "reate", 55], ["", "V", "iew", 44],
  ["", "S", "elect", 53], ["", "H", "ighlight", 71], ["Sche", "m", "atic", 81], ["", "W", "indow", 64], ["Help", "", "", 42],
];
const title = "IC Compiler II - BlockWindow.1 - Design Planning - TRAFFIC_SYS_LIB:traffic_sys.design [write]";

const Spin = ({ w, g }: { w: number; g?: number }) => (
  <SpinBox $w={w} $g={g}>
    0
    <Steps>
      <Caret $s={3} $up />
      <Caret $s={3} $c="#999" />
    </Steps>
  </SpinBox>
);

const sideTools: [string, boolean][] = [
  ["info", true], ["zoomIn", true], ["ruler", true], ["move", false], ["resize", false], ["mirror", false],
  ["place", false], ["wires", false], ["split", false], ["bump", false], ["cut", false], ["copy", false],
  ["arrows", false], ["spread", false], ["blocks", false], ["newWire", true], ["newRow", true], ["del", true],
];

export default function App() {
  return (
    <Screen>
      <Global />
      <TopBar>
        <TopLeft>
          <Icon n="hat" />
          <Activities>Activities</Activities>
          <Icon n="chip" s={15} />
          <AppName>{title}</AppName>
          <TrayCaret />
        </TopLeft>
        <Clock>Jun 20 15:21 <Dot /></Clock>
        <Tray>
          <Icon n="network" />
          <Icon n="volume" />
          <Icon n="power" s={15} />
          <TrayCaret $ml={-3} />
        </Tray>
      </TopBar>
      <TitleBar>
        <span />
        <span>{title}</span>
        <svg width="9" height="9" viewBox="0 0 9 9">
          <path d="M1 1L8 8M8 1L1 8" stroke="#2e3436" strokeWidth="2.2" />
        </svg>
      </TitleBar>
      <Body>
        <MenuBar>
          <Icon n="grid" />
          <Lab $g={8} />
          {menus.map(([a, u, b, w]) => (
            <MenuItem key={b + a} $w={w}>{a}{u && <u>{u}</u>}{b}</MenuItem>
          ))}
          <Icon n="find" />
          <MenuRight>
            <Icon n="layout" /><Icon n="restore" /><Icon n="popOut" /><Icon n="closeP" />
          </MenuRight>
        </MenuBar>
        <ToolRow>
          <ToolGroup $w={61}><Handle /><Icon n="folder" g={8} dy={6} /><Icon n="save" g={8} dy={6} /></ToolGroup>
          <ToolGroup $w={115}>
            <Handle /><Icon n="eraser" g={8} dy={6} /><Caret $g={7} $dy={6} /><Icon n="eraseAll" g={7} dy={6} />
            <Caret $g={8} $dy={6} $off /><Icon n="burst" g={8} dy={6} />
          </ToolGroup>
          <ToolGroup $w={91}>
            <Handle /><Icon n="findNew" g={8} dy={6} /><Caret $g={7} $dy={6} /><Icon n="findCheck" g={8} dy={6} /><Caret $g={7} $dy={6} />
          </ToolGroup>
          <ToolGroup $w={61}><Handle /><Icon n="findPrev" g={8} dy={6} /><Icon n="findNext" g={8} dy={6} /></ToolGroup>
          <ToolGroup $w={106}>
            <Handle /><Icon n="undo" g={10} /><Caret $g={7} $off /><Icon n="redo" g={9} /><Caret $g={7} $off />
          </ToolGroup>
          <ToolGroup $w={194}>
            <Handle /><Spin w={41} g={7} /><Icon n="pick" g={4} dy={2} /><Icon n="sliders" g={12} dy={2} />
            <Icon n="pushDown" g={11} dy={2} /><Icon n="popUp" g={11} dy={2} /><Icon n="popTop" g={11} dy={2} />
          </ToolGroup>
          <ToolGroup $w={169}>
            <Handle /><Icon n="windows" g={8} dy={4} /><Caret $g={7} $dy={4} /><Icon n="three" g={8} dy={4} /><Caret $g={8} $dy={4} />
            <Icon n="hier" g={7} dy={4} /><Caret $g={7} $dy={4} /><Icon n="camera" g={8} dy={4} /><Caret $g={7} $dy={4} />
          </ToolGroup>
          <ToolGroup $w={195}>
            <Handle /><Icon n="cc" g={8} dy={4} /><Icon n="gate" g={8} dy={4} /><Icon n="grid" g={8} dy={4} /><Icon n="treeHand" g={8} dy={4} />
            <Icon n="burstHand" g={8} dy={4} /><Icon n="battery" g={8} dy={4} /><Caret $g={7} $dy={4} /><Icon n="treeG" g={8} dy={4} />
          </ToolGroup>
          <ToolGroup $w={179}>
            <Handle /><Icon n="drc" g={11} /><Caret $g={8} /><Icon n="checkSide" g={8} /><Icon n="checkSteps" g={11} />
            <Icon n="ems" g={11} /><Icon n="icv" g={11} /><Caret $g={8} $off />
          </ToolGroup>
          <ToolGroup $w={749}>
            <Handle /><Icon n="layCheck" g={10} /><Caret $g={8} />
            <FlatButton $g={5}><Icon n="layUp" /></FlatButton>
            <FlatButton $g={4}><Icon n="layX" /></FlatButton>
          </ToolGroup>
        </ToolRow>
        <ModeRow>
          <Handle $h={45} />
          <ModeButton>
            <Pressed><Icon n="pointer" s={15} /></Pressed>
            <Caret $s={3.5} />
          </ModeButton>
          <ModeBlock $w={183} $l={8} $s={38}>
            <ModeLine><Heading $w={81}>Input mode</Heading><RadioDot /><Lab>Rectangle</Lab></ModeLine>
            <ModeLine><RadioDot $on /><Lab $w={64}>Smart</Lab><RadioDot /><Lab>Line</Lab></ModeLine>
          </ModeBlock>
          <ModeBlock $w={143}>
            <ModeLine><Heading>Rectangle Intersect</Heading></ModeLine>
            <ModeLine><Check /><Lab>Enable</Lab></ModeLine>
          </ModeBlock>
          <ModeBlock $w={56}>
            <ModeLine><Heading>Partial</Heading></ModeLine>
            <ModeLine><Check /><Lab $g={3}>Yes</Lab></ModeLine>
          </ModeBlock>
          <ModeBlock $w={144}>
            <ModeLine><Heading>Selection</Heading></ModeLine>
            <ModeLine><Combo $w={80}>Replace<Caret /></Combo><GhostButton $w={50} $g={4}>Clear</GhostButton></ModeLine>
          </ModeBlock>
          <ModeBlock $w={159}>
            <ModeLine><Heading $w={45}>Query</Heading><Check on /><Lab $g={3}>Map</Lab></ModeLine>
            <ModeLine><Lab $w={45} $g={0} /><Check on /><Lab $g={3}>Annotations</Lab></ModeLine>
          </ModeBlock>
          <ModeBlock $w={40} $l={6}>
            <ModeLine />
            <ModeLine><Icon n="help" /></ModeLine>
          </ModeBlock>
        </ModeRow>
        <Work>
          <SideBar>
            <Grip />
            <SideItem $h={28} $x={2} $t={4}><Pressed $bg="#d3d3d8"><Icon n="pointer" s={15} /></Pressed></SideItem>
            {sideTools.map(([n, c]) => (
              <SideItem key={n} $t={1}><Icon n={n} />{c && <Caret $g={7} />}</SideItem>
            ))}
            <SideLine $full />
            <Grip $t={4} />
            <SideItem $h={28} $t={4}><Icon n="lock" /><Caret $g={7} $off /></SideItem>
            <SideItem $t={1}><Icon n="unlock" /></SideItem>
            <SideItem $t={1}><Icon n="plan" /></SideItem>
            <SideItem $t={1}><Icon n="editNo" /></SideItem>
            <SideItem $t={1}><Icon n="editOk" /></SideItem>
            <SideLine $t={3} />
            <SideItem $h={28}><Icon n="ungroup" /></SideItem>
            <SideItem $h={18}><Icon n="rect" /><Caret $g={7} $off /></SideItem>
            <SideLine $t={6} />
            <SideItem $h={28}><Icon n="rotate" /><Caret $g={7} $off /></SideItem>
            <SideItem $h={18}><Icon n="align" /><Caret $g={7} $off /></SideItem>
            <SideItem $h={26} $t={2}><Icon n="center" /><Caret $g={7} $off /></SideItem>
            <SideInput>0</SideInput>
          </SideBar>
          <Canvas>
            <Die />
            {portYs.map((y) => {
              const c = cyanPorts.includes(y) ? "#4fb0c4" : "#b84ec6";
              return (
                <Port key={y} $y={y} width="18" height="11">
                  <rect x="0.5" y="3.5" width="17" height="4" fill={c} fillOpacity="0.45" stroke={c} />
                  <rect x="3.5" y="0.5" width="10" height="10" fill="none" stroke={c} />
                  <path d="M6 3.5H11M6 7.5H11M8.5 3V8" stroke={c} />
                </Port>
              );
            })}
            {cells.map(([n, t, a, b, c, d]) => {
              const v = t === V;
              return (
                <CellBox key={n} $b={[a, b, c, d]} $v={v}>
                  <CellLabel $v={v} $t={1}><span>{n}</span></CellLabel>
                  <CellLabel $v={v} $t={d - b > 102 ? 0 : 2}><span>{t}</span></CellLabel>
                </CellBox>
              );
            })}
          </Canvas>
          <Dock>
            <DockTitle>
              <Icon n="eyeTab" s={15} />
              <Lab $g={0}>View Settings</Lab>
              <DockGrip />
              <RightTri />
            </DockTitle>
            <DockBody>
              <DockLeft>
                <TabRow><Tab $w={76} $on>Layout.1</Tab></TabRow>
                <Pane $pad="3px 3px 1px 3px">
                  <Line $h={24}>
                    <GhostButton $w={43}>Apply</GhostButton>
                    <Icon n="help" g={206} s={15} /><Icon n="gear" g={8} s={15} />
                  </Line>
                  <Line $h={26}>
                    <Icon n="sun" s={15} />
                    <Combo $w={62} $h={23} $g={3}>100%<Caret /></Combo>
                    <Lab $g={84} $w={37}>Level</Lab>
                    <Spin w={41} />
                    <Icon n="pick" g={5} /><Icon n="sliders" g={9} s={15} />
                  </Line>
                  <TabRow>
                    <Tab $w={70} $on>Objects</Tab><Tab $w={61}>Layers</Tab><Tab $w={73}>Settings</Tab>
                  </TabRow>
                  <Pane $pad="8px 0 5px 5px">
                    <Line $h={17}><Check /><Lab>Only select highlighted</Lab></Line>
                    <Line $h={34}>
                      <Filter>Filter objects by type name<Icon n="find" s={14} /></Filter>
                      <Icon n="funnel" g={8} s={14} />
                    </Line>
                    <Table>
                      <TableMain>
                        <THead>
                          <Lab $g={0} $w={76}>Arrange By</Lab>
                          <Combo $w={83} $h={19}>Default<Caret /></Combo>
                          <Icon n="sort" g={9} s={14} /><HSep />
                          <Icon n="eyeBox" g={4} s={14} /><HSep $g={3} />
                          <Icon n="pickBox" g={4} s={14} /><HSep $g={3} />
                          <HSep $g={28} />
                        </THead>
                        <Tree>
                          {rows.map(([n, l, k, a, b, c], i) => (
                            <TRow key={i}>
                              <TName><TreeBranch lvl={l} k={k} /><span>{n}</span></TName>
                              <Box v={a} />
                              <Box v={b} />
                              {c ? <Swatch c={c} /> : <span />}
                            </TRow>
                          ))}
                        </Tree>
                      </TableMain>
                      <Scroll>
                        <Caret $s={3.5} $up />
                        <Thumb><i /></Thumb>
                        <Caret $s={3.5} $dy={122} />
                      </Scroll>
                    </Table>
                  </Pane>
                  <PresetRow>
                    <Lab $g={0} $w={43}>Preset</Lab>
                    <Combo $w={199} $h={23}><Icon n="uBox" s={13} /><PresetName>Default</PresetName><Caret /></Combo>
                    <Icon n="refresh" g={6} s={14} /><Icon n="menu" g={11} s={15} />
                  </PresetRow>
                </Pane>
              </DockLeft>
              <SideTabs>
                <VTab $h={154} $on $i={8}><Icon n="eyeTab" /><VText $h={99}>View Settings</VText><Cross g={-6} /></VTab>
                <VTab $h={163} $i={9}><Icon n="prop" /><VText $h={109}>Property Editor</VText><Cross g={-6} /></VTab>
                <VTab $h={125} $i={9}><Icon n="star" s={15} /><VText $h={70}>Favorites</VText><Cross g={-6} /></VTab>
                <VTab $h={101} $i={9}><Icon n="tasks" /><VText $h={46}>Tasks</VText><Cross g={-6} /></VTab>
                <VRest />
              </SideTabs>
            </DockBody>
          </Dock>
          <BottomTabs>
            <BottomGrip><Caret $s={4.5} $up $c={P} /><GripBars /></BottomGrip>
            <BTab $w={118} $on><Icon n="console" /><Lab $g={9} $w={63}>Console</Lab><Cross /></BTab>
            <BTab $w={146}><Icon n="edit" /><Lab $g={9} $w={92}>Script Editor</Lab><Cross /></BTab>
            <BRest />
          </BottomTabs>
          <DockFoot><FootLine /></DockFoot>
        </Work>
        <StatusBar>
          <Icon n="ab" />
          <Stat $g={6} $w={1469} $t={1}>Click objects or drag a box to select (Hold Ctrl to add, Shift to remove)</Stat>
          <Stat $i $w={63}>No Grid</Stat>
          <Stat $b $w={24}>XY</Stat>
          <Stat $w={119}>12.459, -0.176</Stat>
          <Icon n="xy" />
          <HSep $g={15} />
          <Stat $i $g={6} $w={130}>No Selection</Stat>
          <Icon n="selOff" /><Icon n="queue" g={13} />
        </StatusBar>
      </Body>
    </Screen>
  );
}
